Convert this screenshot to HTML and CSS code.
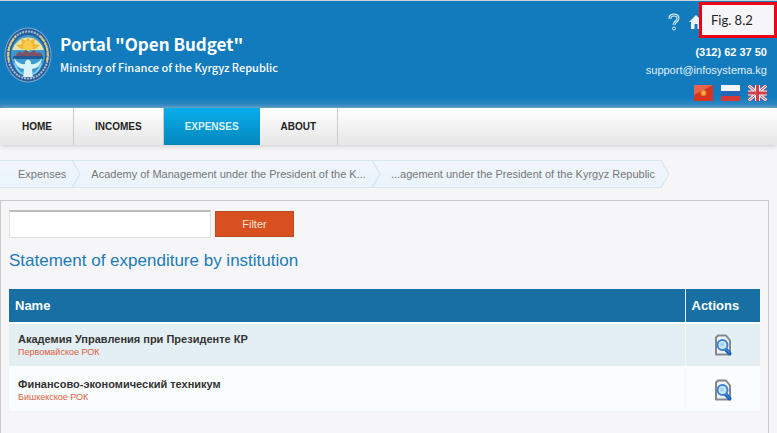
FILE: index.html
```html
<!DOCTYPE html>
<html lang="en"><head>
<meta charset="utf-8">
<title>Portal "Open Budget"</title>
<link rel="stylesheet" href="styles.css">
</head><body>
<svg class="defs" width="0" height="0" aria-hidden="true">
<symbol id="view" viewBox="0 0 18 22">
<path d="M4 1.500h8l4 5v14H2v-17z" fill="#eef3f9" stroke="#85878e" stroke-width="2" stroke-linejoin="round"/>
<path d="M11.500 15l4 4.500" stroke="#1763bd" stroke-width="4" stroke-linecap="round"/>
<path d="M12.500 15.500l2.500 3" stroke="#5ba2e8" stroke-width="1" stroke-linecap="round"/>
<circle cx="8.500" cy="11" r="5" fill="#c9e7fb" stroke="#3f80cf" stroke-width="2"/>
<circle cx="8" cy="10.500" r="2" fill="#a3d2f6"/>
</symbol>
</svg>
<header class="header">
<div class="brand">
<svg class="emblem" viewBox="0 0 48 56" preserveAspectRatio="none" role="img" aria-label="Emblem">
<ellipse cx="24" cy="28" rx="23.500" ry="27.500" fill="#7fa9cf"/>
<ellipse cx="24" cy="28" rx="22.500" ry="26.500" fill="#285f9c"/>
<ellipse cx="24" cy="28" rx="20" ry="23.500" fill="none" stroke="#a9bfd0" stroke-width="2" stroke-dasharray="2 1"/>
<path d="M5 34Q2 20 12 9M43 34Q46 20 36 9" fill="none" stroke="#e2cd6b" stroke-width="2" stroke-dasharray="4 1"/>
<ellipse cx="24" cy="28" rx="17" ry="20" fill="#3b9bd0"/>
<path d="M8 23a17 19 0 0 1 32 0z" fill="#e6e3ae"/>
<path d="M24 9l2 5 5-3-1 6 6 1-5 4h-14l-5-4 6-1-1-6 5 3z" fill="#f1b631"/>
<ellipse cx="24" cy="19" rx="5" ry="5" fill="#f8cd4b"/>
<path d="M11 29l4-5 3 2 4-3 4 3 4-3 3 3 3-1 3 4z" fill="#7a5364"/>
<path d="M9 29h30v3h-30z" fill="#225c98"/>
<path d="M10 31q5 7 11 6v-2q3-5 6 0v2q6 1 11-6-1 10-10 11l1 8h-10l1-8q-9-1-10-11z" fill="#d8f2fa"/>
<path d="M11 36q2 9 8 11M37 36q-2 9-8 11" fill="none" stroke="#7dd0ed" stroke-width="2"/>
</svg>
<div>
<h1 class="title">Portal "Open Budget"</h1>
<p class="subtitle">Ministry of Finance of the Kyrgyz Republic</p>
</div>
</div>
<div class="contacts">
<div class="tools">
<a href="#" aria-label="Help"><svg width="12" height="18" viewBox="0 0 12 18"><path d="M2 6V5q0-3 4-3t4 3q0 2-2 3.500T6 12" fill="none" stroke="#d5e8f5" stroke-width="3"/><path d="M2 6V5q0-3 4-3t4 3q0 2-2 3.500T6 12" fill="none" stroke="#3a91c8" stroke-width="1"/><circle cx="6" cy="15.500" r="1.500" fill="none" stroke="#d5e8f5"/></svg></a>
<a href="#" aria-label="Home page"><svg width="16" height="16" viewBox="0 0 16 16"><path d="M8 1l7 7h-2v7H9.500v-5h-3v5H3V8H1z" fill="#eef6fb"/><path d="M11 2h2v4l-2-2z" fill="#eef6fb"/></svg></a>
</div>
<strong class="phone">(312) 62 37 50</strong>
<a class="mail" href="mailto:support@infosystema.kg">support@infosystema.kg</a>
<div class="langs">
<a href="#" aria-label="Kyrgyz"><svg width="19" height="16" viewBox="0 0 19 16"><path d="M0 0h19v16H0z" fill="#d8331f"/><path d="M0 0h19L0 10z" fill="#e8624c"/><circle cx="9.500" cy="8" r="3" fill="#ef8a2c"/><circle cx="9.500" cy="8" r="1.500" fill="#f5c04a"/></svg></a>
<a href="#" aria-label="Russian"><svg width="19" height="16" viewBox="0 0 19 16"><path d="M0 0h19v6H0z" fill="#f3f5f8"/><path d="M0 6h19v5H0z" fill="#2465b4"/><path d="M0 11h19v5H0z" fill="#d33a37"/></svg></a>
<a href="#" aria-label="English"><svg width="19" height="16" viewBox="0 0 19 16"><path d="M0 0h19v16H0z" fill="#4968a3"/><path d="M0 0l19 16M19 0L0 16" stroke="#f0e9ee" stroke-width="3"/><path d="M0 0l19 16M19 0L0 16" stroke="#d34b55" stroke-width="1"/><path d="M9.500 0v16M0 8h19" stroke="#f5f0f2" stroke-width="5"/><path d="M9.500 0v16M0 8h19" stroke="#d0404a" stroke-width="3"/></svg></a>
</div>
</div>
</header>
<div class="figure">Fig. 8.2</div>
<nav class="nav">
<a href="#">HOME</a>
<a href="#">INCOMES</a>
<a class="active" href="#">EXPENSES</a>
<a href="#">ABOUT</a>
</nav>
<nav class="crumbs" aria-label="Breadcrumb">
<a href="#">Expenses</a>
<svg class="arrow" viewBox="0 0 9 28"><path d="M0 0l8 14-8 14"/></svg>
<a href="#">Academy of Management under the President of the K...</a>
<svg class="arrow" viewBox="0 0 9 28"><path d="M0 0l8 14-8 14"/></svg>
<a href="#">...agement under the President of the Kyrgyz Republic</a>
<svg class="arrow last" viewBox="0 0 9 28"><path d="M0 0l8 14-8 14"/></svg>
</nav>
<main class="panel">
<form class="filter">
<input type="text" aria-label="Institution">
<button type="button">Filter</button>
</form>
<h2 class="heading">Statement of expenditure by institution</h2>
<table class="list">
<thead>
<tr><th>Name</th><th class="actions">Actions</th></tr>
</thead>
<tbody>
<tr>
<td><a class="name" href="#">Академия Управления при Президенте КР</a><span class="rok">Первомайское РОК</span></td>
<td class="actions"><a href="#" aria-label="View"><svg class="view"><use href="#view"/></svg></a></td>
</tr>
<tr>
<td><a class="name" href="#">Финансово-экономический техникум</a><span class="rok">Бишкекское РОК</span></td>
<td class="actions"><a href="#" aria-label="View"><svg class="view"><use href="#view"/></svg></a></td>
</tr>
</tbody>
</table>
</main>
</body></html>
```

FILE: styles.css
```css
* {
	box-sizing: border-box;
}

body {
	display: flex;
	flex-direction: column;
	min-height: 100vh;
	margin: 0;
	background: #f6f6f9;
	color: #333;
	font: 11px/18px "Liberation Sans", Arial, sans-serif;
}

a {
	color: inherit;
	text-decoration: none;
}

svg {
	display: block;
}

.defs {
	position: absolute;
}

.header {
	display: flex;
	justify-content: space-between;
	height: 108px;
	padding: 0 10px 0 4px;
	border-top: 1px solid #c9d3d8;
	background: linear-gradient(#117bbd 96px, #3a8cc2);
	color: #fff;
}

.brand {
	display: flex;
	align-items: center;
	gap: 8px;
}

.emblem {
	width: 48px;
	height: 56px;
}

.title,
.subtitle {
	margin: 0;
	font-family: "Noto Sans CJK SC", "Open Sans", sans-serif;
}

.title {
	font-size: 17px;
	line-height: 24px;
}

.subtitle {
	font-size: 11px;
	font-weight: 500;
	line-height: 22px;
}

.contacts {
	display: flex;
	flex-direction: column;
	align-items: flex-end;
	padding-top: 12px;
}

.tools {
	display: flex;
	align-items: center;
	gap: 8px;
	height: 18px;
	margin-right: 63px;
}

.phone {
	margin-top: 12px;
}

.mail {
	color: #e1f0fa;
}

.langs {
	display: flex;
	gap: 8px;
	margin-top: 6px;
}

.figure {
	position: absolute;
	top: 2px;
	right: 0;
	width: 78px;
	height: 36px;
	padding-left: 9px;
	border: 3px solid #f00014;
	background: #f6f6f9;
	color: #222;
	font: 13px/30px Lato, sans-serif;
}

.nav {
	display: flex;
	height: 37px;
	background: linear-gradient(#fff, #e6e6e6);
	box-shadow: 0 1px 5px #ccc;
	color: #222;
	font-size: 10px;
	font-weight: bold;
	line-height: 38px;
}

.nav a {
	padding: 0 21px;
	border-right: 1px solid #ccc;
}

.nav a:first-child {
	padding-left: 22px;
}

.nav .active {
	border: 0;
	background: linear-gradient(#08adeb, #0487bd);
	color: #d9f2fc;
}

.crumbs {
	display: flex;
	align-self: flex-start;
	height: 28px;
	margin-top: 15px;
	padding-left: 18px;
	background: linear-gradient(#f1f6fb, #e9f4fb);
	border: solid #d8e7ef;
	border-width: 1px 0;
	color: #777;
	line-height: 26px;
	white-space: nowrap;
}

.crumbs a + .arrow {
	margin-left: 6px;
}

.arrow {
	width: 9px;
	height: 28px;
	margin: -1px 10px 0 0;
	fill: none;
	stroke: #cfe0ea;
}

.arrow.last {
	margin-right: 0;
	background: #f6f6f9;
	fill: #edf5fb;
}

.panel {
	flex: 1;
	margin: 12px 8px 0 0;
	padding: 9px 8px 22px;
	border: solid #ccc;
	border-width: 1px 1px 0;
}

.filter {
	display: flex;
	align-items: center;
	gap: 4px;
}

.filter input {
	width: 202px;
	height: 28px;
	border: 1px solid #e1e1e1;
	border-top: 2px solid #bbb;
	background: #fff;
}

.filter button {
	width: 79px;
	height: 26px;
	border: 1px solid #bd4a20;
	background: #d8501f;
	color: #fbe3d8;
	font: inherit;
}

.heading {
	margin: 10px 0 15px;
	color: #1c7bb5;
	font-size: 17px;
	font-weight: normal;
	line-height: 26px;
}

.list {
	width: 100%;
	border-collapse: collapse;
}

.list th {
	height: 34px;
	padding: 0 6px;
	background: #176fa3;
	color: #fff;
	font-size: 13px;
	text-align: left;
}

.list td {
	height: 44px;
	padding: 0 9px;
	border-top: 2px solid #fafdfd;
	background: #e4eff3;
}

.list tr:nth-child(2) td {
	background: #fafdfd;
}

.list .actions {
	width: 75px;
	border-left: 1px solid #f3f8fa;
}

.name,
.rok {
	display: block;
}

.name {
	font-weight: bold;
	line-height: 14px;
}

.rok {
	color: #e0603f;
	font-size: 9px;
	line-height: 12px;
}

.view {
	width: 18px;
	height: 22px;
	margin: 0 auto;
}
```
